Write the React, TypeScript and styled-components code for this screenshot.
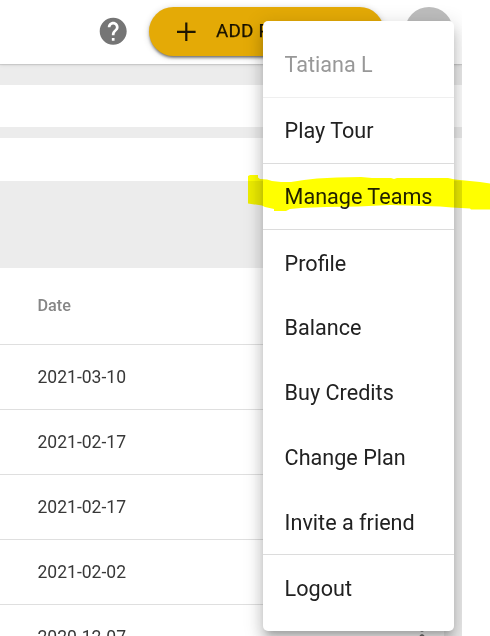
import React from "react";
import styled, { createGlobalStyle } from "styled-components";

const GlobalStyle = createGlobalStyle`
  html, body { margin: 0; background: #fff; overflow: hidden; }
  * { box-sizing: border-box; }
  body { font-family: Roboto, "Liberation Sans", sans-serif; }
`;

const Stage = styled.div`
  position: relative;
  width: 490px;
  height: 636px;
  overflow: hidden;
  background: #fff;
`;

const Page = styled.div`
  position: relative;
  width: 462px;
  height: 636px;
  overflow: hidden;
  background: #ececec;
  display: flex;
  flex-direction: column;
`;

const Header = styled.header`
  flex: none;
  z-index: 1;
  height: 64px;
  padding: 7px 9px 0 97px;
  display: flex;
  align-items: flex-start;
  background: #fff;
  box-shadow: 0 1px 1px rgba(0, 0, 0, 0.1), 0 1px 4px rgba(0, 0, 0, 0.09);
`;

const HelpIcon = styled.svg`
  flex: none;
  width: 32.4px;
  height: 32.4px;
  margin: 7.7px 19.6px 0 0;
  fill: #757575;
`;

const AddButton = styled.button`
  flex: none;
  width: 235px;
  height: 49px;
  padding: 0 0 0 21px;
  border: 0;
  border-radius: 25px;
  display: flex;
  align-items: center;
  background: #e4aa06;
  color: rgba(0, 0, 0, 0.87);
  font: 400 18.9px/33px Roboto, "Liberation Sans", sans-serif;
  letter-spacing: 0.01em;
  -webkit-text-stroke: 0.25px currentColor;
  white-space: nowrap;
  box-shadow: 0 3px 3px -2px rgba(0, 0, 0, 0.4), 0 2px 3px rgba(0, 0, 0, 0.26),
    0 1px 7px rgba(0, 0, 0, 0.16);

  svg {
    width: 32px;
    height: 32px;
    margin-right: 14px;
    fill: currentColor;
  }
  span { position: relative; top: -1px; }
`;

const Avatar = styled.div`
  flex: none;
  width: 48px;
  height: 48px;
  margin-left: 21px;
  border-radius: 50%;
  background: #bdbdbd;
`;

const Panel = styled.section<{ $top: number; $height: number }>`
  flex: none;
  height: ${(p) => p.$height}px;
  margin-top: ${(p) => p.$top}px;
  background: #fff;
`;

const Table = styled.section`
  flex: none;
  width: 444px;
  margin-top: 87px;
  background: #fff;
`;

const TableRow = styled.div<{ $head?: boolean }>`
  height: ${(p) => (p.$head ? 77 : 65)}px;
  padding: 0 6px 1px 37.5px;
  display: flex;
  align-items: center;
  justify-content: space-between;
  border-bottom: 1px solid #dfdfdf;
  color: ${(p) => (p.$head ? "#868686" : "#383838")};
  font-size: ${(p) => (p.$head ? 16.2 : 17.55)}px;
  font-weight: ${(p) => (p.$head ? 500 : 400)};

  svg { width: 32px; height: 32px; fill: #757575; }
`;

const Menu = styled.nav`
  position: absolute;
  z-index: 2;
  left: 263px;
  top: 21px;
  width: 191px;
  height: 610px;
  padding: 11px 0;
  border-radius: 5px;
  background: #fff;
  box-shadow: 0 7px 7px -4px rgba(0, 0, 0, 0.2),
    0 11px 14px 1px rgba(0, 0, 0, 0.14), 0 4px 19px 3px rgba(0, 0, 0, 0.12);
`;

const MenuGroup = styled.div<{ $muted?: boolean; $compact?: boolean }>`
  padding: ${(p) => (p.$compact ? "1px 0 0" : "0 0 1px")};
  color: ${(p) => (p.$muted ? "#989898" : "#212121")};

  &:not(:last-child) {
    box-shadow: inset 0 -1px ${(p) => (p.$muted ? "#efefef" : "#dcdcdc")};
  }
`;

const MenuItem = styled.div`
  height: 65px;
  padding: 0 21.6px;
  line-height: 65px;
  font-size: 21.6px;
  white-space: nowrap;

  &:first-child:not(:last-child) { height: 64px; }
`;

const Marker = styled.svg`
  position: absolute;
  z-index: 3;
  inset: 0;
  width: 490px;
  height: 636px;
  mix-blend-mode: multiply;
  pointer-events: none;
  fill: #ff0;
`;

const menuGroups = [
  { items: ["Tatiana L"], muted: true },
  { items: ["Play Tour"] },
  { items: ["Manage Teams"] },
  {
    items: ["Profile", "Balance", "Buy Credits", "Change Plan", "Invite a friend"],
    compact: true,
  },
  { items: ["Logout"], compact: true },
];

const dates = ["2021-03-10", "2021-02-17", "2021-02-17", "2021-02-02", "2020-12-07"];

const markerOutline =
  "248,176 250,175 258,175 258,177.5 260,179 267,179.5 272,181 281,182 291,182 304,180 317,178.5 337,177.5 361,177 372,178 391,178 394,179 397,178 448,178 455,179.5 470,181 480,182 490,183.5 490,209.5 471,209.5 470,208.5 452,207.5 440,206.5 408,205.5 390,205 358,206.5 326,207 301,208 290,209 286,211 274,211 274,209 265,207 262,205.5 248,203.5";

export default function App() {
  return (
    <>
      <GlobalStyle />
      <Stage>
        <Page>
          <Header>
            <HelpIcon viewBox="0 0 24 24">
              <path d="M12 2C6.48 2 2 6.48 2 12s4.48 10 10 10 10-4.48 10-10S17.52 2 12 2zm1 17h-2v-2h2v2zm2.07-7.75l-.9.92C13.45 12.9 13 13.5 13 15h-2v-.5c0-1.1.45-2.1 1.17-2.83l1.24-1.26c.37-.36.59-.86.59-1.41 0-1.1-.9-2-2-2s-2 .9-2 2H8c0-2.21 1.79-4 4-4s4 1.79 4 4c0 .88-.36 1.68-.93 2.25z" />
            </HelpIcon>
            <AddButton>
              <svg viewBox="0 0 32 32">
                <path d="M7 14.8h8.2V6.5h2.2v8.3h8.2v2.2h-8.2v8h-2.2v-8H7z" />
              </svg>
              <span>ADD PROJECT</span>
            </AddButton>
            <Avatar />
          </Header>
          <Panel $top={21} $height={42} />
          <Panel $top={11} $height={43} />
          <Table>
            <TableRow $head>Date</TableRow>
            {dates.map((date, i) => (
              <TableRow key={i}>
                {date}
                <svg viewBox="0 0 24 24">
                  <path d="M12 8c1.1 0 2-.9 2-2s-.9-2-2-2-2 .9-2 2 .9 2 2 2zm0 2c-1.1 0-2 .9-2 2s.9 2 2 2 2-.9 2-2-.9-2-2-2zm0 6c-1.1 0-2 .9-2 2s.9 2 2 2 2-.9 2-2-.9-2-2-2z" />
                </svg>
              </TableRow>
            ))}
          </Table>
          <Menu>
            {menuGroups.map((group) => (
              <MenuGroup key={group.items[0]} $muted={group.muted} $compact={group.compact}>
                {group.items.map((label) => (
                  <MenuItem key={label}>{label}</MenuItem>
                ))}
              </MenuGroup>
            ))}
          </Menu>
        </Page>
        <Marker viewBox="0 0 490 636">
          <polygon points={markerOutline} />
        </Marker>
      </Stage>
    </>
  );
}
